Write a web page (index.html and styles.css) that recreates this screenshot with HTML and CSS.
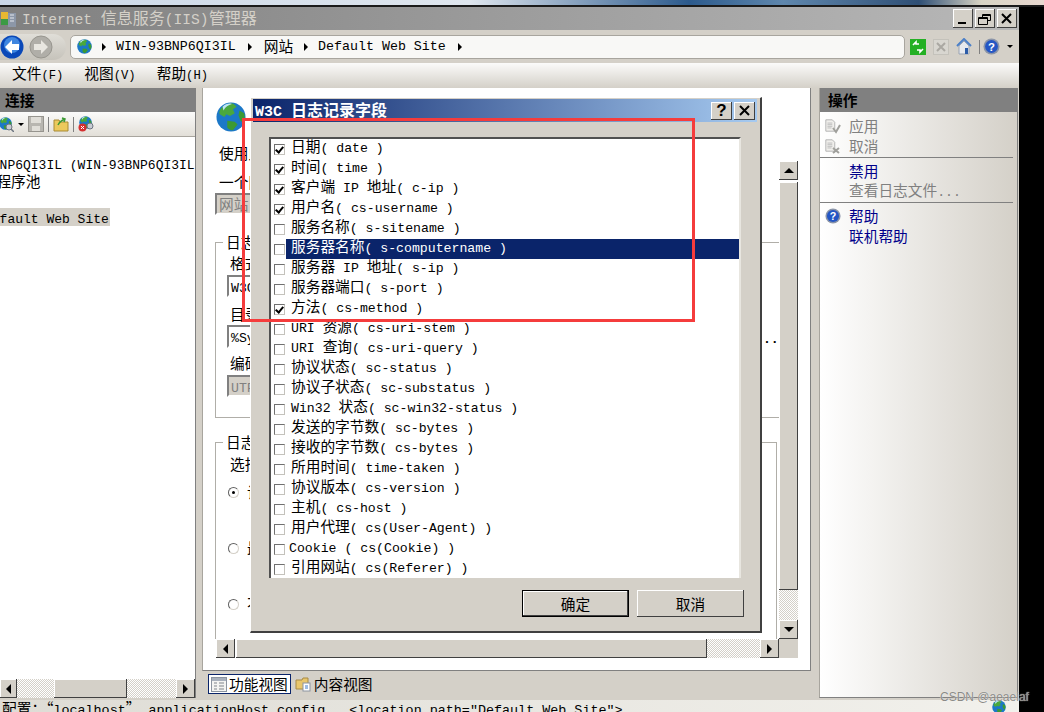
FILE: index.html
```html
<!DOCTYPE html>
<html lang="zh-CN">
<head>
    <meta charset="UTF-8">
    <title>Internet 信息服务(IIS)管理器</title>
    <link rel="stylesheet" href="styles.css">
</head>
<body>
    <svg class="defs" width="0" height="0">
        <symbol id="globe" viewBox="0 0 32 32">
            <circle cx="16" cy="16" r="15.5" fill="#1c78c8"/>
            <path d="M6 6c4-4 9-5 13-4l3 3-4 3 2 4-5 3-4-2-2 3-5-3c-1-2 0-5 2-7z" fill="#4aa83c"/>
            <path d="M12 20l8 1 3 3-5 6c-3 0-5-1-6-3zM25 9l5 3c1 3 1 7-1 10l-3-2-2-6z" fill="#3c9a34"/>
            <path d="M7 5c3-3 7-4 10-3-4 1-7 3-9 7z" fill="#bfe4f4"/>
        </symbol>
        <symbol id="help" viewBox="0 0 18 18">
            <circle cx="9" cy="9" r="8.5" fill="#8a94a8"/>
            <circle cx="9" cy="9" r="6.8" fill="#2456c4"/>
            <text x="9" y="13.5" text-anchor="middle" font-family="Liberation Sans" font-weight="700" font-size="12" fill="#fff">?</text>
        </symbol>
        <symbol id="doc" viewBox="0 0 16 16">
            <path d="M1 1h8l3 3v11H1z" fill="#f0efec" stroke="#a8a8a8"/>
            <path d="M3 5h6M3 7h6M3 9h6M3 11h5" stroke="#b4b4b4"/>
        </symbol>
    </svg>

    <div class="desktop"></div>

    <div class="window">
        <div class="titlebar">
            <svg class="app-icon" width="16" height="18" viewBox="0 0 16 18">
                <rect x="0" y="2" width="7" height="8" fill="#e8b830"/>
                <rect x="0" y="9" width="8" height="6" fill="#3c9a44"/>
                <rect x="7" y="3" width="8" height="14" fill="#8c97a8"/>
                <path d="M9 5h4M9 8h4M9 11h4" stroke="#e4e8ee"/>
            </svg>
            <div class="title-text"><span class="m">Internet </span>信息服务<span class="m">(IIS)</span>管理器</div>
            <div class="winbtns">
                <div class="winbtn"><svg width="20" height="18"><rect x="5" y="12" width="8" height="2" fill="#000"/></svg></div>
                <div class="winbtn"><svg width="20" height="18"><path d="M7.5 4.5h8v6h-3M7.5 4.5v3M7.5 5.5h8M3.5 7.5h9v7h-9zM3.5 8.5h9" fill="none" stroke="#000"/></svg></div>
                <div class="winbtn"><svg width="20" height="18"><path d="M5 4l9 9M14 4l-9 9" stroke="#000" stroke-width="2"/></svg></div>
            </div>
        </div>

        <div class="addressbar">
            <div class="nav">
                <svg width="24" height="24" viewBox="0 0 24 24">
                    <circle cx="12" cy="12" r="11.5" fill="#0a48b8"/>
                    <circle cx="12" cy="10" r="8" fill="#3f86e0"/>
                    <path d="M12 5l-7 7 7 7v-4h7v-6h-7z" fill="#fff"/>
                </svg>
                <svg class="nav-next" width="24" height="24" viewBox="0 0 24 24">
                    <circle cx="12" cy="12" r="11" fill="#b0aea8" stroke="#98968f"/>
                    <path d="M12 5l7 7-7 7v-4H5V9h7z" fill="#e8e6e0"/>
                </svg>
            </div>
            <div class="path">
                <svg class="path-globe" width="15" height="15"><use href="#globe"/></svg>
                <i class="arrow"></i><span class="m">WIN-93BNP6QI3IL</span>
                <i class="arrow"></i><span class="site">网站</span>
                <i class="arrow"></i><span class="m">Default Web Site</span>
                <i class="arrow"></i>
            </div>
            <div class="addr-tools">
                <svg width="16" height="16" viewBox="0 0 16 16">
                    <rect width="16" height="16" fill="#24b024"/>
                    <path d="M3 6l3-3v2h3M13 10l-3 3v-2H7" fill="none" stroke="#fff" stroke-width="1.6"/>
                </svg>
                <svg width="16" height="16" viewBox="0 0 16 16">
                    <rect x=".5" y=".5" width="15" height="15" fill="#d8d6d0" stroke="#c4c2bb"/>
                    <path d="M4 4l8 8M12 4l-8 8" stroke="#aaa8a2" stroke-width="2"/>
                </svg>
                <svg width="16" height="17" viewBox="0 0 16 17">
                    <path d="M1 8l7-7 7 7" fill="none" stroke="#4c80c8" stroke-width="2"/>
                    <path d="M3 8l5-5 5 5v8H3z" fill="#e6e9ee" stroke="#9aa4b4"/>
                    <rect x="9" y="10" width="3" height="6" fill="#2c5ca8"/>
                </svg>
                <i class="tool-sep"></i>
                <svg width="17" height="17"><use href="#help"/></svg>
                <i class="caret"></i>
            </div>
        </div>

        <div class="menubar">
            <span>文件<span class="m">(F)</span></span>
            <span>视图<span class="m">(V)</span></span>
            <span>帮助<span class="m">(H)</span></span>
        </div>

        <div class="main">
            <!-- 连接 -->
            <div class="left">
                <div class="pane-head">连接</div>
                <div class="toolbar">
                    <svg class="tb-first" width="15" height="15" viewBox="0 0 15 15">
                        <use href="#globe" width="13" height="13"/>
                        <circle cx="10" cy="10" r="3" fill="#c8ccd4" stroke="#6c7480"/>
                        <path d="M12 12l3 3" stroke="#6c7480" stroke-width="1.5"/>
                    </svg>
                    <i class="caret"></i>
                    <svg width="16" height="16" viewBox="0 0 16 16">
                        <rect x=".5" y=".5" width="15" height="15" fill="#b8b6b0" stroke="#96948e"/>
                        <rect x="3" y="1" width="10" height="6" fill="#e0ded8"/>
                        <rect x="4" y="10" width="8" height="5" fill="#e0ded8"/>
                    </svg>
                    <i class="tb-sep"></i>
                    <svg width="16" height="15" viewBox="0 0 16 15">
                        <path d="M1 3h5l1 2h8v9H1z" fill="#ecc95c" stroke="#a88a34"/>
                        <path d="M5 8c2-4 4-5 7-6M9 1l3 1-1 3" fill="none" stroke="#3c9a34" stroke-width="1.5"/>
                    </svg>
                    <i class="tb-sep"></i>
                    <svg width="17" height="16" viewBox="0 0 17 16">
                        <use href="#globe" width="13" height="13" x="1"/>
                        <circle cx="12" cy="10" r="3" fill="#c8ccd4" stroke="#6c7480"/>
                        <circle cx="4.5" cy="11.5" r="4" fill="#d43030"/>
                        <path d="M3 10l3 3M6 10l-3 3" stroke="#fff"/>
                    </svg>
                </div>
                <div class="tree">
                    <div class="tree-row first"><span class="m">WIN-93BNP6QI3IL (WIN-93BNP6QI3IL)</span></div>
                    <div class="tree-row second">应用程序池</div>
                    <div class="tree-row third"><span class="m">Default Web Site</span></div>
                </div>
                <div class="hscroll">
                    <div class="sbtn"><i class="tri-left"></i></div>
                    <div class="track left-track"></div>
                    <div class="thumb left-thumb"></div>
                    <div class="track"></div>
                    <div class="sbtn"><i class="tri-right"></i></div>
                </div>
            </div>

            <!-- 日志 -->
            <div class="center">
                <div class="panel">
                    <svg class="panel-globe" width="30" height="30"><use href="#globe"/></svg>
                    <div class="desc">使用此功能配置</div>
                    <div class="scroller">
                        <div class="content">
                            <div class="line intro">一个网站</div>
                            <div class="input grey first-input">网站</div>
                            <fieldset class="group">
                                <legend>日志文件</legend>
                                <div class="line f1">格式</div>
                                <div class="input f2"><span class="m">W3C</span></div>
                                <div class="line f3">目录</div>
                                <div class="dir-row">
                                    <div class="input dir"><span class="m">%SystemDrive%</span></div>
                                    <span class="m dots">...</span>
                                </div>
                                <div class="line f5">编码</div>
                                <div class="input grey f6"><span class="m">UTF-8</span></div>
                            </fieldset>
                            <fieldset class="group second-group">
                                <legend>日志文件滚动更新</legend>
                                <div class="line g1">选择</div>
                                <div class="radio-row g2"><i class="radio on"></i>计划</div>
                                <div class="radio-row g3"><i class="radio"></i>最大</div>
                                <div class="radio-row g3"><i class="radio"></i>不创建</div>
                            </fieldset>
                        </div>
                        <div class="vscroll">
                            <div class="sbtn"><i class="tri-up"></i></div>
                            <div class="thumb v-thumb"></div>
                            <div class="track"></div>
                            <div class="sbtn"><i class="tri-down"></i></div>
                        </div>
                        <div class="hscroll">
                            <div class="sbtn"><i class="tri-left"></i></div>
                            <div class="thumb h-thumb"></div>
                            <div class="track"></div>
                            <div class="sbtn"><i class="tri-right"></i></div>
                        </div>
                        <div class="corner"></div>
                    </div>
                </div>
                <div class="tabs">
                    <div class="tab active">
                        <svg width="16" height="15" viewBox="0 0 16 15">
                            <rect x=".5" y=".5" width="15" height="14" fill="#f4f4f2" stroke="#8c94a0"/>
                            <rect x="1" y="1" width="14" height="3" fill="#a8b0bc"/>
                            <path d="M3 6h3M8 6h5M3 9h3M8 9h5M3 12h3M8 12h5" stroke="#80858c"/>
                        </svg>
                        功能视图
                    </div>
                    <div class="tab content-tab">
                        <svg width="16" height="16" viewBox="0 0 16 16">
                            <path d="M1 4h6l1-2h5v11H1z" fill="#e8c66c" stroke="#a88a44"/>
                            <rect x="8" y="7" width="7" height="8" fill="#fff" stroke="#8c94a0"/>
                            <path d="M10 10h3M10 12h3" stroke="#3c78c8"/>
                        </svg>
                        内容视图
                    </div>
                </div>
            </div>

            <!-- 操作 -->
            <div class="right">
                <div class="pane-head">操作</div>
                <div class="actions">
                    <div class="action off">
                        <svg width="16" height="16" viewBox="0 0 16 16"><use href="#doc" width="13" height="15"/><path d="M8 10l3 4 4-7" fill="none" stroke="#a0a09c" stroke-width="2"/></svg>
                        应用
                    </div>
                    <div class="action off">
                        <svg width="16" height="16" viewBox="0 0 16 16"><use href="#doc" width="13" height="15"/><path d="M8 10l6 5M14 10l-6 5" stroke="#a0a09c" stroke-width="2"/></svg>
                        取消
                    </div>
                    <div class="act-sep"></div>
                    <div class="action link"><i class="no-icon"></i>禁用</div>
                    <div class="action off"><i class="no-icon"></i><span>查看日志文件<span class="m">...</span></span></div>
                    <div class="act-sep"></div>
                    <div class="action link"><svg width="16" height="16"><use href="#help"/></svg>帮助</div>
                    <div class="action link"><i class="no-icon"></i>联机帮助</div>
                </div>
            </div>
        </div>

        <div class="statusbar">
            <div class="status-text">配置：“<span class="m">localhost</span>”<span class="m"> applicationHost.config , &lt;location path="Default Web Site"&gt;</span></div>
            <svg class="status-icon" width="14" height="14"><use href="#globe"/></svg>
        </div>

        <!-- W3C 日志记录字段 -->
        <div class="dialog">
            <div class="dlg-title">
                <span class="dlg-name"><span class="m">W3C </span>日志记录字段</span>
                <div class="winbtn small q">?</div>
                <div class="winbtn small"><svg width="20" height="18"><path d="M5 4l9 9M14 4l-9 9" stroke="#000" stroke-width="2"/></svg></div>
            </div>
            <div class="dlg-body">
                <div class="fields">
                    <div class="field"><i class="cb on"></i><span class="txt">日期<span class="m">( date )</span></span></div>
                    <div class="field"><i class="cb on"></i><span class="txt">时间<span class="m">( time )</span></span></div>
                    <div class="field"><i class="cb on"></i><span class="txt">客户端<span class="m"> IP </span>地址<span class="m">( c-ip )</span></span></div>
                    <div class="field"><i class="cb on"></i><span class="txt">用户名<span class="m">( cs-username )</span></span></div>
                    <div class="field"><i class="cb"></i><span class="txt">服务名称<span class="m">( s-sitename )</span></span></div>
                    <div class="field selected"><i class="cb"></i><span class="txt">服务器名称<span class="m">( s-computername )</span></span></div>
                    <div class="field"><i class="cb"></i><span class="txt">服务器<span class="m"> IP </span>地址<span class="m">( s-ip )</span></span></div>
                    <div class="field"><i class="cb"></i><span class="txt">服务器端口<span class="m">( s-port )</span></span></div>
                    <div class="field"><i class="cb on"></i><span class="txt">方法<span class="m">( cs-method )</span></span></div>
                    <div class="field"><i class="cb"></i><span class="txt"><span class="m">URI </span>资源<span class="m">( cs-uri-stem )</span></span></div>
                    <div class="field"><i class="cb"></i><span class="txt"><span class="m">URI </span>查询<span class="m">( cs-uri-query )</span></span></div>
                    <div class="field"><i class="cb"></i><span class="txt">协议状态<span class="m">( sc-status )</span></span></div>
                    <div class="field"><i class="cb"></i><span class="txt">协议子状态<span class="m">( sc-substatus )</span></span></div>
                    <div class="field"><i class="cb"></i><span class="txt"><span class="m">Win32 </span>状态<span class="m">( sc-win32-status )</span></span></div>
                    <div class="field"><i class="cb"></i><span class="txt">发送的字节数<span class="m">( sc-bytes )</span></span></div>
                    <div class="field"><i class="cb"></i><span class="txt">接收的字节数<span class="m">( cs-bytes )</span></span></div>
                    <div class="field"><i class="cb"></i><span class="txt">所用时间<span class="m">( time-taken )</span></span></div>
                    <div class="field"><i class="cb"></i><span class="txt">协议版本<span class="m">( cs-version )</span></span></div>
                    <div class="field"><i class="cb"></i><span class="txt">主机<span class="m">( cs-host )</span></span></div>
                    <div class="field"><i class="cb"></i><span class="txt">用户代理<span class="m">( cs(User-Agent) )</span></span></div>
                    <div class="field"><i class="cb"></i><span class="txt cookie"><span class="m">Cookie ( cs(Cookie) )</span></span></div>
                    <div class="field"><i class="cb"></i><span class="txt">引用网站<span class="m">( cs(Referer) )</span></span></div>
                </div>
                <div class="dlg-btns">
                    <div class="btn default">确定</div>
                    <div class="btn">取消</div>
                </div>
            </div>
        </div>

        <div class="redbox"></div>
    </div>

    <div class="watermark">CSDN @aeaeiaf</div>
</body>
</html>
```

FILE: styles.css
```css
body {
    margin: 0;
    height: 712px;
    overflow: hidden;
    background: #000;
    font-family: "Noto Sans CJK SC", sans-serif;
    font-size: 14.7px;
    line-height: 16px;
    color: #000;
    position: relative;
}

.defs {
    position: absolute;
}

.m {
    font-family: "Liberation Mono", monospace;
    font-size: 13.2px;
}

i {
    display: block;
    font-style: normal;
}

.desktop {
    height: 5px;
    background: linear-gradient(90deg, #c9d6e6 0, #dfe6ee 45%, #2c5a8c 66%, #5f87ad 75%, #2f4f75 88%, #d8d4c4 94%, #e8d8d0 100%);
    border-bottom: 2px solid #1a1a1a;
}

.window {
    position: relative;
    width: 1019px;
    height: 705px;
    display: flex;
    flex-direction: column;
    background: #d4d0c8;
}

/* title */
.titlebar {
    height: 23px;
    display: flex;
    align-items: center;
    background: linear-gradient(90deg, #808080, #b8b8b8);
    color: #d4d0c8;
    font-size: 16px;
}

.titlebar .m {
    font-size: 14.6px;
}

.app-icon {
    margin-left: 1px;
}

.title-text {
    margin-left: 5px;
    white-space: pre;
}

.winbtns {
    margin-left: auto;
    margin-right: 2px;
    display: flex;
    gap: 2px;
}

.winbtn {
    width: 20px;
    height: 19px;
    background: #d4d0c8;
    box-shadow: inset -1px -1px #404040, inset 1px 1px #fff;
    display: flex;
    justify-content: center;
    align-items: center;
}

/* address */
.addressbar {
    height: 33px;
    display: flex;
    align-items: center;
    background: #d4d0c8;
}

.nav {
    width: 66px;
    height: 26px;
    display: flex;
    align-items: center;
    gap: 5px;
    margin-right: 4px;
    background: linear-gradient(#e0ded8, #c6c3bb);
    border-radius: 0 13px 13px 0;
}

.nav-next {
    margin-right: 4px;
}

.path {
    width: 833px;
    height: 22px;
    display: flex;
    align-items: center;
    background: #f8f8f6;
    border: 1px solid #a8a59e;
    border-radius: 5px;
    box-sizing: content-box;
}

.path .m {
    font-size: 13.3px;
}

.path-globe {
    margin-left: 6px;
    margin-right: 9px;
}

.arrow {
    width: 0;
    height: 0;
    margin: 0 10px 0 1px;
    border-left: 4px solid #000;
    border-top: 4px solid transparent;
    border-bottom: 4px solid transparent;
}

.path span {
    margin-right: 11px;
}

.path .site {
    margin-left: 2px;
    margin-right: 10px;
    margin-top: -2px;
}

.addr-tools {
    display: flex;
    align-items: center;
    margin-left: 5px;
    gap: 7px;
}

.tool-sep {
    width: 1px;
    height: 14px;
    background: #808080;
    margin: 0 -4px 0 0;
}

.caret {
    width: 0;
    height: 0;
    border-top: 3px solid #000;
    border-left: 3px solid transparent;
    border-right: 3px solid transparent;
}

/* menu */
.menubar {
    height: 25px;
    box-sizing: border-box;
    padding-bottom: 2px;
    display: flex;
    align-items: center;
    gap: 21px;
    padding-left: 12px;
    background: linear-gradient(#fbfbfa, #d4d0c8);
}

.menubar .m {
    font-size: 12.2px;
}

/* panes */
.main {
    flex: 1;
    display: flex;
    background: #d4d0c8;
    min-height: 0;
}

.pane-head {
    height: 24px;
    line-height: 24px;
    background: #808080;
    font-weight: 700;
    font-size: 14.7px;
    padding-left: 5px;
}

.left {
    width: 195px;
    height: 610px;
    display: flex;
    flex-direction: column;
    border-right: 1px solid #808080;
    margin-right: 6px;
    background: #fff;
}

.toolbar {
    height: 24px;
    display: flex;
    align-items: center;
    gap: 4px;
    background: linear-gradient(#fbfbfa, #e2dfd8);
    border-bottom: 1px solid #a8a59e;
}

.tb-first {
    margin-left: -1px;
}

.tb-sep {
    width: 1px;
    height: 15px;
    background: #808080;
}

.tree {
    flex: 1;
    overflow: hidden;
    padding-top: 17px;
    white-space: nowrap;
}

.tree-row {
    height: 18px;
    line-height: 18px;
}

.tree-row.first {
    margin-left: -55px;
}

.tree-row.second {
    margin-left: -33px;
}

.tree-row.third {
    width: 124px;
    margin-top: 18px;
    margin-left: -16px;
    padding-right: 2px;
    background: #d4d0c8;
}

.tree-row .m {
    font-size: 13px;
}

.hscroll {
    display: flex;
    height: 19px;
    flex: none;
}

.vscroll {
    display: flex;
    flex-direction: column;
    width: 19px;
}

.sbtn,
.thumb {
    background: #d4d0c8;
    box-shadow: inset -1px -1px #404040, inset 1px 1px #fff;
}

.sbtn {
    flex: none;
    width: 19px;
    height: 19px;
    display: flex;
    justify-content: center;
    align-items: center;
}

.left .hscroll .sbtn:first-child {
    width: 17px;
}

.track {
    flex: 1;
    background: repeating-conic-gradient(#d4d0c8 0 25%, #fff 0 50%) 0 0 / 2px 2px;
}

.left-track {
    flex: none;
    width: 37px;
}

.left-thumb {
    width: 73px;
    flex: none;
}

.h-thumb {
    width: 471px;
    margin-left: 1px;
    flex: none;
}

.v-thumb {
    height: 408px;
    margin-top: 2px;
    flex: none;
}

.tri-left,
.tri-right {
    width: 0;
    height: 0;
    border-top: 5px solid transparent;
    border-bottom: 5px solid transparent;
}

.tri-left {
    border-right: 5px solid #000;
}

.tri-right {
    border-left: 5px solid #000;
}

.tri-up,
.tri-down {
    width: 0;
    height: 0;
    border-left: 5px solid transparent;
    border-right: 5px solid transparent;
}

.tri-up {
    border-bottom: 5px solid #000;
}

.tri-down {
    border-top: 5px solid #000;
}

/* center */
.center {
    width: 609px;
    display: flex;
    flex-direction: column;
    margin-right: 8px;
}

.panel {
    height: 583px;
    box-sizing: border-box;
    background: #fff;
    border-left: 1px solid #a8a59e;
    border-right: 1px solid #808080;
    border-bottom: 1px solid #808080;
    padding: 14px 12px 12px 13px;
    display: flex;
    flex-direction: column;
}

.panel-globe {
    flex: none;
    margin-bottom: 13px;
}

.desc {
    height: 16px;
    padding-left: 3px;
    white-space: nowrap;
    overflow: hidden;
}

.scroller {
    height: 497px;
    display: grid;
    grid-template-columns: 1fr 19px;
    grid-template-rows: 1fr 19px;
}

.content {
    overflow: hidden;
    margin-left: -1px;
}

.corner {
    background: #d4d0c8;
}

.line {
    height: 16px;
    white-space: nowrap;
}

.intro {
    margin-top: 13px;
    padding-left: 4px;
}

.input {
    height: 22px;
    line-height: 18px;
    box-sizing: border-box;
    padding-left: 2px;
    border: 2px solid;
    border-color: #808080 #fff #fff #808080;
    white-space: nowrap;
    overflow: hidden;
}

.input.grey {
    background: #d4d0c8;
    color: #808080;
}

.first-input {
    margin-top: 3px;
    width: 500px;
}

.group {
    margin: 19px 2px 0 0;
    padding: 0;
    border: 1px solid #b0aea8;
    height: 184px;
    box-sizing: border-box;
}

.group legend {
    padding: 0 3px;
    margin-left: 7px;
    height: 16px;
}

.group .line {
    margin-left: 14px;
}

.group .input {
    margin-left: 11px;
    width: 500px;
}

.f1 {
    margin-top: 5px;
}

.f2 {
    margin-top: 4px;
}

.f3 {
    margin-top: 9px;
}

.dir-row {
    margin-top: 3px;
    display: flex;
    align-items: flex-end;
}

.group .dir {
    height: 23px;
    width: 520px;
}

.dots {
    margin-left: 8px;
    font-weight: 700;
}

.f5 {
    margin-top: 7px;
}

.f6 {
    margin-top: 4px;
}

.second-group {
    margin-top: 16px;
    height: 230px;
}

.g1 {
    margin-top: 6px;
}

.radio-row {
    display: flex;
    align-items: center;
    gap: 8px;
    height: 16px;
    margin-left: 12px;
    margin-top: 40px;
}

.radio-row.g2 {
    margin-top: 12px;
}

.radio {
    width: 11px;
    height: 11px;
    box-sizing: border-box;
    border-radius: 50%;
    border: 1px solid;
    border-color: #606060 #d4d0c8 #d4d0c8 #606060;
    background: #fff;
    position: relative;
}

.radio.on::after {
    content: "";
    position: absolute;
    left: 3px;
    top: 3px;
    width: 3px;
    height: 3px;
    border-radius: 50%;
    background: #000;
}

/* tabs */
.tabs {
    flex: 1;
    display: flex;
    align-items: flex-start;
    padding: 3px 0 0 6px;
    gap: 2px;
}

.tab {
    display: flex;
    align-items: center;
    gap: 2px;
    height: 20px;
    padding: 0 2px;
    box-sizing: border-box;
    border: 1px solid transparent;
}

.tab.active {
    border-color: #0a246a;
    background: #fff;
}

.content-tab {
    gap: 3px;
    padding-left: 0;
    margin-left: 1px;
}

/* right */
.right {
    width: 199px;
    height: 610px;
    box-sizing: border-box;
    border-right: 1px solid #808080;
    border-bottom: 1px solid #808080;
    border-left: 1px solid #a8a59e;
    background: linear-gradient(90deg, #fff, #d4d0c8);
}

.right .pane-head {
    padding-left: 8px;
}

.actions {
    padding-top: 4px;
}

.action {
    height: 20px;
    display: flex;
    align-items: center;
    gap: 8px;
    padding-left: 5px;
    white-space: nowrap;
}

.action.off {
    color: #808080;
}

.action.link {
    color: #00008b;
}

.no-icon {
    width: 16px;
}

.act-sep {
    height: 1px;
    margin: 1px 4px 3px 0;
    background: #808080;
}

/* status */
.statusbar {
    height: 12px;
    display: flex;
    padding-left: 2px;
    overflow: hidden;
    background: linear-gradient(90deg, #dedcd5, #f2f1ec);
}

.status-text {
    white-space: pre;
    line-height: 16px;
}

.status-text .m {
    font-size: 13.4px;
}

.status-icon {
    margin-left: auto;
    margin-right: 13px;
    flex: none;
}

/* dialog */
.dialog {
    position: absolute;
    left: 250px;
    top: 90px;
    width: 512px;
    height: 536px;
    box-sizing: border-box;
    padding: 1px 3px 0;
    background: #d4d0c8;
    border-top: 1px solid #fff;
    border-left: 1px solid #fff;
    border-right: 2px solid #404040;
    border-bottom: 2px solid #404040;
}

.dlg-title {
    height: 23px;
    display: flex;
    align-items: center;
    gap: 2px;
    padding-right: 2px;
    margin-left: -1px;
    background: linear-gradient(90deg, #0a246a, #a6caf0);
    color: #fff;
    font-size: 16px;
    font-weight: 700;
}

.dlg-title .m {
    font-size: 15px;
}

.dlg-name {
    margin-right: auto;
    padding-left: 2px;
    white-space: pre;
}

.winbtn.small {
    width: 21px;
    height: 18px;
    color: #000;
}

.winbtn.q {
    font-family: "Liberation Sans", sans-serif;
    font-size: 17px;
}

.dlg-body {
    padding: 15px 15px 0 15px;
}

.fields {
    width: 472px;
    height: 441px;
    box-sizing: border-box;
    overflow: hidden;
    background: #fff;
    border: 2px solid;
    border-color: #505050 #d4d0c8 #d4d0c8 #505050;
    border-right-color: #e8e6e0;
    border-bottom: 0;
    white-space: nowrap;
}

.field {
    height: 20px;
    display: flex;
    padding-left: 3px;
}

.cb {
    flex: none;
    width: 11px;
    height: 11px;
    margin-top: 5px;
    box-sizing: border-box;
    border: 1px solid;
    border-color: #707070 #c4c2bc #c4c2bc #707070;
    position: relative;
}

.cb.on::after {
    content: "";
    position: absolute;
    left: 2px;
    top: 0;
    width: 3px;
    height: 6px;
    border: solid #000;
    border-width: 0 2px 2px 0;
    transform: rotate(40deg);
}

.txt {
    flex: 1;
    margin-left: 1px;
    padding-left: 5px;
    height: 20px;
    line-height: 14px;
    white-space: pre;
}

.txt.cookie {
    padding-left: 3px;
}

.field.selected .txt {
    background: #0a246a;
    color: #fff;
}

.dlg-btns {
    display: flex;
    justify-content: flex-end;
    gap: 8px;
    margin-top: 12px;
    margin-right: -2px;
}

.btn {
    width: 107px;
    height: 27px;
    line-height: 27px;
    text-align: center;
    background: #d4d0c8;
    box-sizing: border-box;
    box-shadow: inset -1px -1px #404040, inset 1px 1px #fff;
}

.btn.default {
    box-shadow: inset 0 0 0 1px #000, inset -2px -2px #404040, inset 2px 2px #fff;
}

.redbox {
    position: absolute;
    left: 242px;
    top: 111px;
    width: 453px;
    height: 204px;
    box-sizing: border-box;
    border: 3px solid #f53c3c;
}

.watermark {
    position: absolute;
    left: 940px;
    top: 690px;
    font-family: "Liberation Sans", sans-serif;
    font-size: 12px;
    line-height: 14px;
    color: #8a8a86;
    text-shadow: 0 0 1px #fff;
}
```
